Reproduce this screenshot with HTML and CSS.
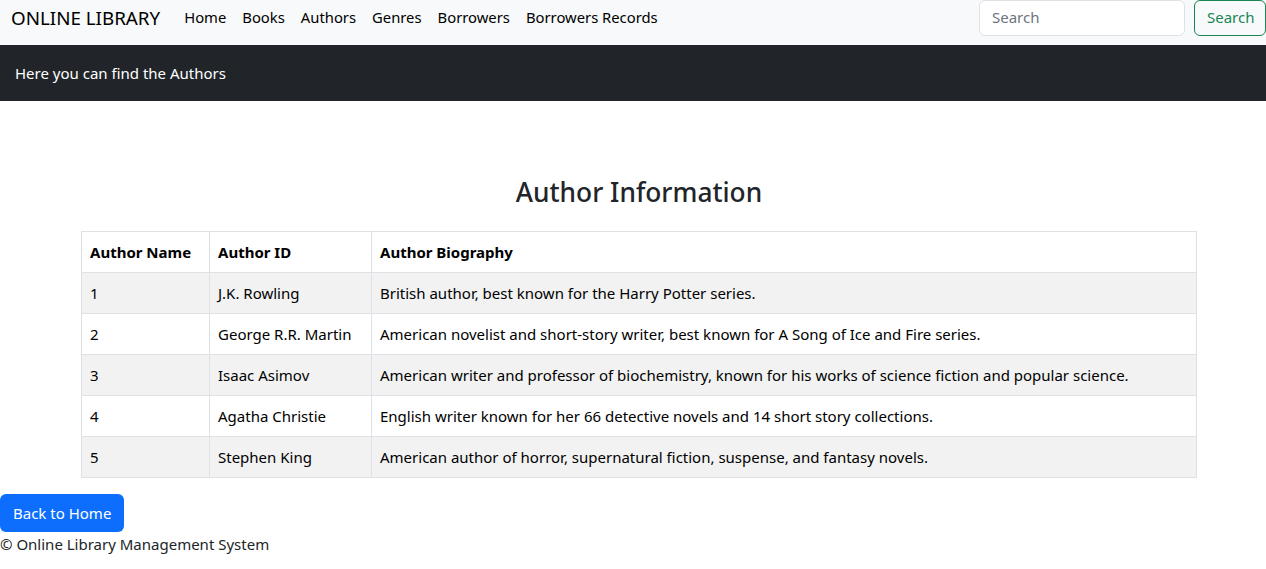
FILE: index.html
```html
<!DOCTYPE html>
<html lang="en">
<head>
<meta charset="utf-8">
<title>Authors - Online Library</title>
<link rel="stylesheet" href="styles.css">
</head>
<body>
<nav class="navbar">
  <a class="brand" href="#">ONLINE LIBRARY</a>
  <ul class="nav-links">
    <li><a href="#">Home</a></li>
    <li><a href="#">Books</a></li>
    <li><a href="#">Authors</a></li>
    <li><a href="#">Genres</a></li>
    <li><a href="#">Borrowers</a></li>
    <li><a href="#">Borrowers Records</a></li>
  </ul>
  <form class="search-form">
    <input class="search-input" type="search" placeholder="Search">
    <button class="search-btn" type="button">Search</button>
  </form>
</nav>
<header class="banner">Here you can find the Authors</header>
<main class="content">
  <h3 class="title">Author Information</h3>
  <table class="authors">
    <thead>
      <tr><th class="c1">Author Name</th><th class="c2">Author ID</th><th>Author Biography</th></tr>
    </thead>
    <tbody>
      <tr><td>1</td><td>J.K. Rowling</td><td>British author, best known for the Harry Potter series.</td></tr>
      <tr><td>2</td><td>George R.R. Martin</td><td>American novelist and short-story writer, best known for A Song of Ice and Fire series.</td></tr>
      <tr><td>3</td><td>Isaac Asimov</td><td>American writer and professor of biochemistry, known for his works of science fiction and popular science.</td></tr>
      <tr><td>4</td><td>Agatha Christie</td><td>English writer known for her 66 detective novels and 14 short story collections.</td></tr>
      <tr><td>5</td><td>Stephen King</td><td>American author of horror, supernatural fiction, suspense, and fantasy novels.</td></tr>
    </tbody>
  </table>
</main>
<a class="home-btn" href="#">Back to Home</a>
<footer class="footer">© Online Library Management System</footer>
</body>
</html>
```
FILE: styles.css
```css
* { box-sizing: border-box; }
html, body { margin: 0; padding: 0; }
body {
  font-family: "Noto Sans", "Open Sans", sans-serif;
  font-size: 15px;
  line-height: 24px;
  color: #212529;
  background: #fff;
}
a { text-decoration: none; }

.navbar {
  display: flex;
  align-items: flex-start;
  height: 45px;
  background: #f8f9fa;
  padding-left: 11px;
}
.brand {
  font-size: 18.8px;
  line-height: 36px;
  color: #000;
  margin-right: 16px;
}
.nav-links {
  display: flex;
  list-style: none;
  margin: 0;
  padding: 0;
  flex: 1;
}
.nav-links a {
  display: block;
  padding: 0 8px;
  font-size: 14.8px;
  line-height: 35px;
  color: #000;
}
.search-form {
  display: flex;
  gap: 9px;
}
.search-input {
  width: 206px;
  height: 36px;
  border: 1px solid #dee2e6;
  border-radius: 6px;
  padding: 5px 12px 7px;
  font: inherit;
  color: #212529;
  background: #fff;
}
.search-input::placeholder { color: #6c757d; }
.search-btn {
  height: 36px;
  width: 72px;
  border: 1px solid #198754;
  border-radius: 6px;
  background: transparent;
  color: #198754;
  font: inherit;
  padding: 4px 12px 8px;
}

.banner {
  background: #212529;
  color: #fff;
  height: 56px;
  padding: 16px 15px;
  line-height: 24px;
}

.content {
  padding: 74px 69px 16px 81px;
}
.title {
  margin: 0 0 22px;
  text-align: center;
  font-size: 26.3px;
  font-weight: 500;
  line-height: 34px;
}
.authors {
  width: 100%;
  border-collapse: collapse;
  color: #000;
}
.authors th, .authors td {
  border: 1px solid #dee2e6;
  padding: 8px;
  height: 41px;
  text-align: left;
  vertical-align: middle;
}
.authors th { font-weight: 700; }
.authors .c1 { width: 128px; }
.authors .c2 { width: 162px; }
.authors tbody tr:nth-child(odd) { background: #f2f2f2; }

.home-btn {
  display: inline-block;
  background: #0d6efd;
  color: #fff;
  border-radius: 6px;
  padding: 7px 13px;
  line-height: 24px;
}
.footer {
  line-height: 24px;
}
```
